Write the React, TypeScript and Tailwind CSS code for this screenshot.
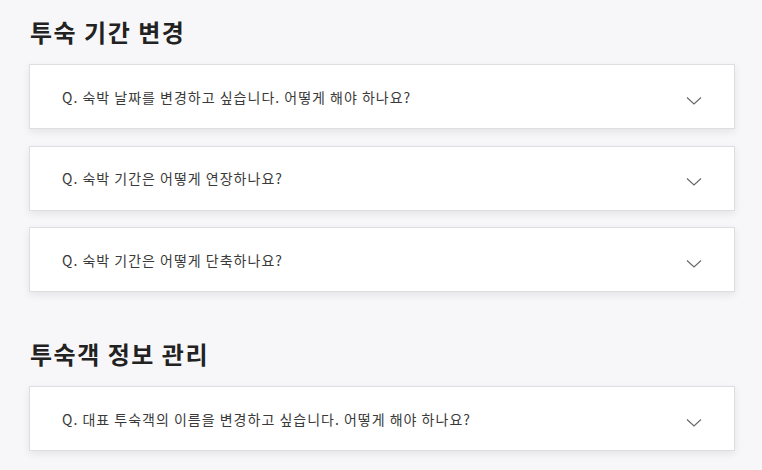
import React from "react";

const Chevron = () => (
  <svg width="16" height="9" viewBox="0 0 16 9" fill="none" className="shrink-0">
    <path d="M1 1.5 L8 8 L15 1.5" stroke="#666" strokeWidth="1.1" />
  </svg>
);

const Item = ({ q }: { q: string }) => (
  <div className="flex h-[65px] items-center justify-between border border-[#dedee2] bg-white pl-[32px] pr-[32px] shadow-[0_3px_8px_rgba(0,0,0,0.08)]">
    <span className="text-[14px] leading-none text-[#3a3a3a] tracking-[1px]">{q}</span>
    <div className="mt-[7px]">
      <Chevron />
    </div>
  </div>
);

export default function App() {
  return (
    <div
      className="min-h-[470px] w-[762px] bg-[#f7f7f9] pl-[29px] pr-[27px]"
      style={{ fontFamily: '"Noto Sans CJK KR", "Noto Sans", sans-serif' }}
    >
      <h2 className="pt-[14px] text-[24px] font-bold leading-[36px] text-[#222] tracking-[1.5px] pl-[1px]">투숙 기간 변경</h2>
      <div className="mt-[14px] flex flex-col gap-[16.5px]">
        <Item q="Q. 숙박 날짜를 변경하고 싶습니다. 어떻게 해야 하나요?" />
        <Item q="Q. 숙박 기간은 어떻게 연장하나요?" />
        <Item q="Q. 숙박 기간은 어떻게 단축하나요?" />
      </div>
      <h2 className="mt-[44px] text-[24px] font-bold leading-[36px] text-[#222] tracking-[1.5px] pl-[1px]">투숙객 정보 관리</h2>
      <div className="mt-[14px] flex flex-col gap-[17px]">
        <Item q="Q. 대표 투숙객의 이름을 변경하고 싶습니다. 어떻게 해야 하나요?" />
      </div>
    </div>
  );
}
